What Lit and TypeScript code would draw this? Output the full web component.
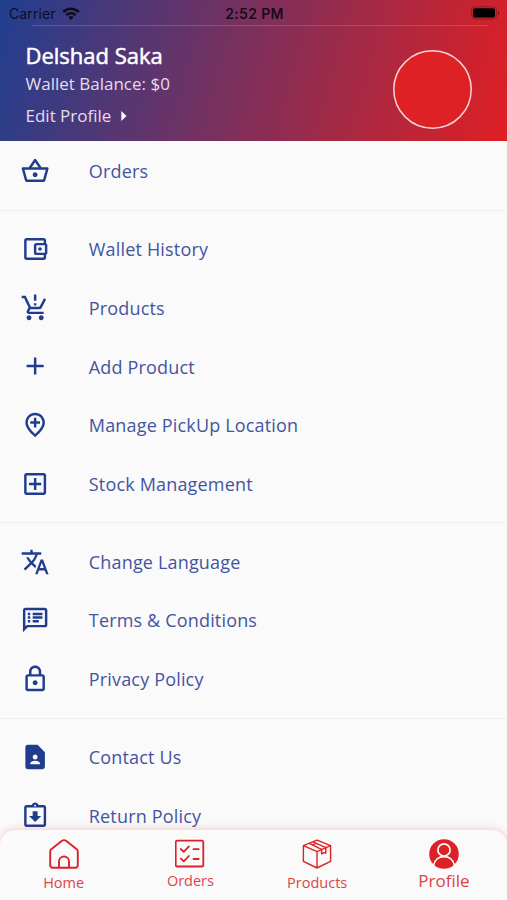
import { LitElement, html, css, svg } from "lit";
import { customElement, property } from "lit/decorators.js";

const ICONS: Record<string, string> = {
  basket:
    "M22 9h-4.79l-4.38-6.56c-.19-.28-.51-.42-.83-.42s-.64.14-.83.43L6.79 9H2c-.55 0-1 .45-1 1 0 .09.01.18.04.27l2.54 9.27c.23.84 1 1.46 1.92 1.46h13c.92 0 1.69-.62 1.93-1.46l2.54-9.27L23 10c0-.55-.45-1-1-1zM12 4.8L14.8 9H9.2L12 4.8zM18.5 19l-12.99.01L3.31 11H20.7l-2.2 8zM12 13c-1.1 0-2 .9-2 2s.9 2 2 2 2-.9 2-2-.9-2-2-2z",
  wallet:
    "M21 7.28V5c0-1.1-.9-2-2-2H5c-1.11 0-2 .9-2 2v14c0 1.1.89 2 2 2h14c1.1 0 2-.9 2-2v-2.28c.59-.35 1-.98 1-1.72V9c0-.74-.41-1.38-1-1.72zM20 9v6h-7V9h7zM5 19V5h14v2h-6c-1.1 0-2 .9-2 2v6c0 1.1.9 2 2 2h6v2H5zM16 10.5a1.5 1.5 0 1 0 0 3a1.5 1.5 0 1 0 0-3z",
  cart: "M13 10h-2V8h2v2zm0-4h-2V1h2v5zM7 18c-1.1 0-1.99.9-1.99 2S5.9 22 7 22s2-.9 2-2-.9-2-2-2zm10 0c-1.1 0-1.99.9-1.99 2s.89 2 1.99 2 2-.9 2-2-.9-2-2-2zm-8.9-5h7.45c.75 0 1.41-.41 1.75-1.03L21 4.96 19.25 4l-3.7 7H8.53L4.27 2H1v2h2l3.6 7.59-1.35 2.44C4.52 15.37 5.48 17 7 17h12v-2H7l1.1-2z",
  add: "M19 13h-6v6h-2v-6H5v-2h6V5h2v6h6v2z",
  pin: "M13 6v3h3v2h-3v3h-2v-3H8V9h3V6h2zm5 4.2C18 6.57 15.35 4 12 4s-6 2.57-6 6.2c0 2.34 1.95 5.44 6 9.14 4.05-3.7 6-6.8 6-9.14zM12 2c4.2 0 8 3.22 8 8.2 0 3.32-2.67 7.25-8 11.8-5.33-4.55-8-8.48-8-11.8C4 5.22 7.8 2 12 2z",
  addBox:
    "M19 3H5c-1.11 0-2 .9-2 2v14c0 1.1.89 2 2 2h14c1.1 0 2-.9 2-2V5c0-1.1-.9-2-2-2zm0 16H5V5h14v14zm-8-2h2v-4h4v-2h-4V7h-2v4H7v2h4z",
  translate:
    "M12.87 15.07l-2.54-2.51.03-.03c1.74-1.94 2.98-4.17 3.71-6.53H17V4h-7V2H8v2H1v1.99h11.17C11.5 7.92 10.44 9.75 9 11.35 8.07 10.32 7.3 9.19 6.69 8h-2c.73 1.63 1.73 3.17 2.98 4.56l-5.09 5.02L4 19l5-5 3.11 3.11.76-2.04zM18.5 10h-2L12 22h2l1.12-3h4.75L21 22h2l-4.5-12zm-2.62 7l1.62-4.33L19.12 17h-3.24z",
  notes:
    "M20 2H4c-1.1 0-1.99.9-1.99 2L2 22l4-4h14c1.1 0 2-.9 2-2V4c0-1.1-.9-2-2-2zm0 14H5.17L4 17.17V4h16v12zM6 12h2v2H6zm0-3h2v2H6zm0-3h2v2H6zm4 6h5v2h-5zm0-3h8v2h-8zm0-3h8v2h-8z",
  lock: "M18 8h-1V6c0-2.76-2.24-5-5-5S7 3.24 7 6v2H6c-1.1 0-2 .9-2 2v10c0 1.1.9 2 2 2h12c1.1 0 2-.9 2-2V10c0-1.1-.9-2-2-2zM9 6c0-1.66 1.34-3 3-3s3 1.34 3 3v2H9V6zm9 14H6V10h12v10zm-6-3c1.1 0 2-.9 2-2s-.9-2-2-2-2 .9-2 2 .9 2 2 2z",
  contact:
    "M14 2H6c-1.1 0-2 .9-2 2v16c0 1.1.89 2 1.99 2H18c1.1 0 2-.9 2-2V8l-6-6zm-2 8c1.1 0 2 .9 2 2s-.9 2-2 2-2-.9-2-2 .9-2 2-2zm4 8H8v-.57c0-.81.48-1.53 1.22-1.85.85-.37 1.79-.58 2.78-.58.99 0 1.93.21 2.78.58.74.32 1.22 1.04 1.22 1.85V18z",
  returned:
    "M19 3h-4.18C14.4 1.84 13.3 1 12 1s-2.4.84-2.82 2H5c-1.1 0-2 .9-2 2v14c0 1.1.9 2 2 2h14c1.1 0 2-.9 2-2V5c0-1.1-.9-2-2-2zM12 2.75c.41 0 .75.34.75.75s-.34.75-.75.75-.75-.34-.75-.75.34-.75.75-.75zM19 19H5V5h14v14zM7 12h3V8h4v4h3l-5 5z",
};

const GROUPS: [string, string][][] = [
  [["basket", "Orders"]],
  [
    ["wallet", "Wallet History"],
    ["cart", "Products"],
    ["add", "Add Product"],
    ["pin", "Manage PickUp Location"],
    ["addBox", "Stock Management"],
  ],
  [
    ["translate", "Change Language"],
    ["notes", "Terms & Conditions"],
    ["lock", "Privacy Policy"],
  ],
  [
    ["contact", "Contact Us"],
    ["returned", "Return Policy"],
  ],
];

const TAB_ICONS = {
  home: svg`<g fill="none" stroke="currentColor" stroke-width="1.9" stroke-linejoin="round">
    <path d="M1.2 12.2Q1.2 11.2 2 10.4L12.6 2Q15 .3 17.4 2L28 10.4Q28.8 11.2 28.8 12.2V26.3Q28.8 28.8 26.3 28.8H3.7Q1.2 28.8 1.2 26.3Z"/>
    <path d="M10 28.5V22.5a5 5 0 0 1 10 0V28.5"/></g>`,
  orders: svg`<g fill="none" stroke="currentColor" stroke-width="1.8" stroke-linecap="round" stroke-linejoin="round">
    <rect x=".7" y="1.7" width="27.6" height="25.8" rx="1.6"/>
    <path d="M5.8 10L8.8 12.8L13.9 7.4M5.8 19.6L8.8 22.4L13.9 17M18.5 10.2h5.2M18.5 20h5.2"/></g>`,
  products: svg`<g fill="none" stroke="currentColor" stroke-width="1.4" stroke-linejoin="round">
    <path d="M15 1.1L28.6 6.6V22.4L15 29L1.4 22.4V6.6ZM1.4 6.6L15 12.6L28.6 6.6M15 12.6V29"/>
    <path d="M10.8 2.9L24 8.7M7.2 4.3L19.6 10.3M19.6 10.3V15L21.6 13.6L23.8 14V8.7M10.4 5.8L14.8 4.2"/></g>`,
  profile: svg`<circle cx="15" cy="15" r="14.8" fill="currentColor"/>
    <g fill="none" stroke="#fafafa" stroke-width="1.7"><circle cx="15" cy="10.9" r="6.1"/>
    <path d="M4.6 26.2C5.6 20.8 9.8 17.6 15 17.6S24.4 20.8 25.4 26.2"/></g>`,
};

@customElement("menu-row")
export class MenuRow extends LitElement {
  @property() icon = "";
  @property() label = "";

  static styles = css`
    :host {
      display: flex;
      align-items: center;
      height: 58.6px;
      padding-left: 20px;
      gap: 39.5px;
      color: #213c8c;
    }
    .icon {
      width: 29.3px;
      height: 29.3px;
      flex: none;
      fill: currentColor;
      margin-bottom: 1px;
    }
    .label {
      font-size: 18px;
      line-height: 24px;
      letter-spacing: 0.17px;
      white-space: nowrap;
      color: #4355a0;
    }
  `;

  render() {
    return html`<svg class="icon" viewBox="-0.4 -0.3 24 24"><path d=${ICONS[this.icon]} /></svg>
      <span class="label">${this.label}</span>`;
  }
}

@customElement("tab-bar")
export class TabBar extends LitElement {
  static styles = css`
    :host {
      display: grid;
      grid-template-columns: repeat(4, 1fr);
      height: 70px;
      background: #fafafa;
      border-radius: 15px 15px 0 0;
      box-shadow: 0 0 8px rgba(222, 32, 37, 0.25);
      color: #dc2127;
    }
    .tab {
      display: flex;
      flex-direction: column;
      align-items: center;
      padding: 8.5px 0 0 0.6px;
    }
    .glyph {
      width: 30px;
      height: 30px;
      flex: none;
    }
    .name {
      font-size: 14.5px;
      line-height: 20px;
      margin-top: 4px;
      color: #dc4449;
    }
    .raised {
      margin-top: 2.5px;
    }
    .active {
      font-size: 17px;
      margin-top: 2.5px;
    }
  `;

  render() {
    return html`
      <div class="tab"><svg class="glyph" viewBox="0 0 30 30">${TAB_ICONS.home}</svg><span class="name">Home</span></div>
      <div class="tab"><svg class="glyph" viewBox="0 0 30 30">${TAB_ICONS.orders}</svg><span class="name raised">Orders</span></div>
      <div class="tab"><svg class="glyph" viewBox="0 0 30 30">${TAB_ICONS.products}</svg><span class="name">Products</span></div>
      <div class="tab"><svg class="glyph" viewBox="0 0 30 30">${TAB_ICONS.profile}</svg><span class="name active">Profile</span></div>
    `;
  }
}

@customElement("app-root")
export class AppRoot extends LitElement {
  static styles = css`
    :host {
      display: flex;
      flex-direction: column;
      height: 900px;
      overflow: hidden;
      background: #fafafa;
      font-family: "Open Sans", "Noto Sans", sans-serif;
    }
    .header {
      flex: none;
      height: 141px;
      box-sizing: border-box;
      background: linear-gradient(105.5deg, #213f90 0%, #e01f23 100%);
      color: #fff;
    }
    .status {
      display: grid;
      grid-template-columns: 1fr auto 1fr;
      align-items: center;
      height: 25px;
      padding: 2px 7px 0 9px;
      box-sizing: border-box;
      font-family: Inter, sans-serif;
      font-size: 14px;
      color: rgba(8, 4, 16, 0.88);
    }
    .carrier {
      display: flex;
      align-items: center;
      gap: 6px;
      letter-spacing: 0.1px;
    }
    .time {
      font-weight: 600;
      letter-spacing: 0.35px;
    }
    .wifi {
      width: 18px;
      height: 13px;
      margin-bottom: 1px;
    }
    .battery {
      width: 29px;
      height: 14px;
      justify-self: end;
      margin-bottom: 1px;
    }
    .rule {
      height: 1px;
      margin: 0 19px 0 32px;
      background: rgba(255, 255, 255, 0.17);
    }
    .account {
      display: flex;
      justify-content: space-between;
      padding: 14px 34.6px 0 25.5px;
    }
    .name {
      font-size: 22px;
      line-height: 30px;
      -webkit-text-stroke: 0.5px #fff;
    }
    .balance {
      font-size: 17px;
      line-height: 24px;
      margin-top: 2px;
      color: #e6dcec;
    }
    .edit {
      display: flex;
      align-items: center;
      gap: 10px;
      font-size: 17px;
      line-height: 24px;
      margin-top: 8px;
      color: #e6dcec;
    }
    .arrow {
      width: 6px;
      height: 10px;
      fill: #fff;
      margin-bottom: 1px;
    }
    .avatar {
      width: 79px;
      height: 79px;
      margin-top: 10.4px;
    }
    .menu {
      flex: 1;
      min-height: 0;
      overflow: hidden;
      padding-top: 1px;
    }
    .divider {
      height: 19.5px;
      display: flex;
      align-items: center;
    }
    .line {
      flex: 1;
      height: 1px;
      background: #efefef;
    }
    .tabs {
      flex: none;
    }
  `;

  render() {
    return html`
      <div class="header">
        <div class="status">
          <div class="carrier">
            <span>Carrier</span>
            <svg class="wifi" viewBox="0 0 18 13" fill="none" stroke="currentColor">
              <path d="M1.2 5a11.2 11.2 0 0 1 15.6 0" stroke-width="2.5" />
              <path d="M4.3 8.2a6.8 6.8 0 0 1 9.4 0" stroke-width="2.4" />
              <path d="M9 12.9L6.4 10.2a3.8 3.8 0 0 1 5.2 0Z" fill="currentColor" stroke="none" />
            </svg>
          </div>
          <span class="time">2:52 PM</span>
          <svg class="battery" viewBox="0 0 29 14">
            <rect x=".6" y=".8" width="25" height="12.2" rx="3.5" fill="none" stroke="#000" stroke-opacity=".28" />
            <rect x="2" y="2.3" width="22" height="9.2" rx="2" />
            <path d="M27 5v4q1.4-.6 1.4-2T27 5z" fill-opacity=".4" />
          </svg>
        </div>
        <div class="rule"></div>
        <div class="account">
          <div>
            <div class="name">Delshad Saka</div>
            <div class="balance">Wallet Balance: $0</div>
            <div class="edit">
              <span>Edit Profile</span>
              <svg class="arrow" viewBox="0 0 6 10"><path d="M.3 0L5.5 5L.3 10z" /></svg>
            </div>
          </div>
          <svg class="avatar" viewBox="0 0 79 79">
            <circle cx="39.5" cy="39.5" r="38.7" fill="#dd2125" stroke="#fbd3d7" stroke-width="1.5" />
          </svg>
        </div>
      </div>
      <div class="menu">
        ${GROUPS.map(
          (rows, i) => html`
            ${i ? html`<div class="divider"><div class="line"></div></div>` : ""}
            ${rows.map(([icon, label]) => html`<menu-row .icon=${icon} .label=${label}></menu-row>`)}
          `
        )}
      </div>
      <tab-bar class="tabs"></tab-bar>
    `;
  }
}
